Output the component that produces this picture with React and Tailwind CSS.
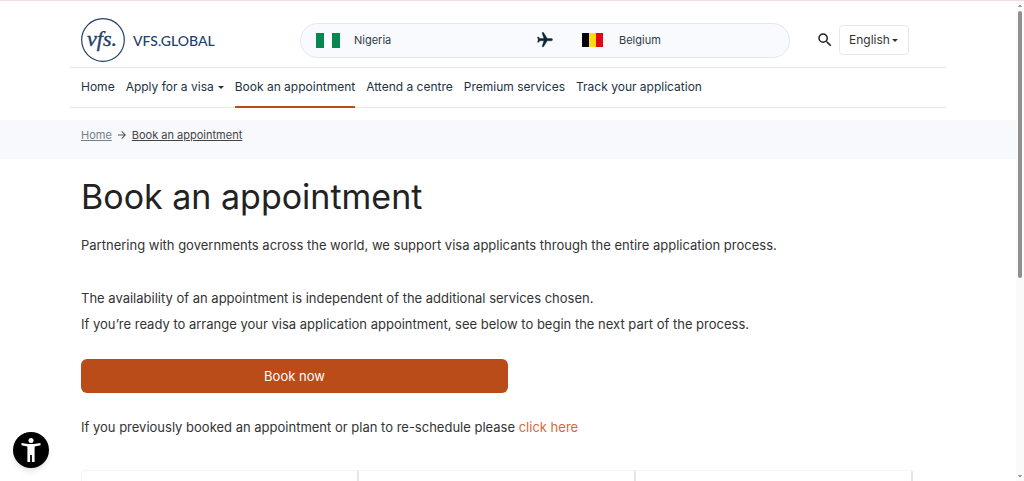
import { MdSearch, MdArrowForward, MdArrowDropDown } from 'react-icons/md';

const NAV_ITEMS = [
  { label: 'Home' },
  { label: 'Apply for a visa', hasMenu: true },
  { label: 'Book an appointment', active: true },
  { label: 'Attend a centre' },
  { label: 'Premium services' },
  { label: 'Track your application' },
];

function Caret({ className = '' }) {
  return (
    <svg viewBox="0 0 6 3" className={`w-1.5 h-[3px] ${className}`} aria-hidden="true">
      <path d="M0 0h6L3 3z" fill="currentColor" />
    </svg>
  );
}

function Logo() {
  return (
    <a href="#" aria-label="VFS.GLOBAL" className="flex items-center gap-2 text-[#1f4068]">
      <svg viewBox="0 0 44 44" className="w-11 h-11" aria-hidden="true">
        <circle cx="22" cy="22" r="21.3" fill="none" stroke="currentColor" strokeWidth="1.2" />
        <text
          x="21"
          y="28"
          textAnchor="middle"
          fill="currentColor"
          stroke="currentColor"
          strokeWidth=".4"
          className="font-['Liberation_Serif',serif] text-[22px] italic"
        >
          vfs.
        </text>
      </svg>
      <span className="pt-0.5 font-['Lato',sans-serif] text-sm font-medium">VFS.GLOBAL</span>
    </a>
  );
}

function RoutePicker() {
  return (
    <div className="ml-auto flex h-[35px] w-[490px] items-center rounded-full border border-[#e3e8f0] bg-[#f8fafd] pl-[15px] text-[#2d3b48] text-[11px]">
      <div className="flex flex-1 items-center gap-3.5">
        <svg viewBox="0 0 24 15" className="w-6 h-[15px]" aria-hidden="true">
          <path d="M0 0h24v15H0z" fill="#fff" />
          <path d="M0 0h8v15H0zM16 0h8v15h-8z" fill="#088751" />
        </svg>
        <span>Nigeria</span>
      </div>
      <svg viewBox="0 0 24 24" className="mr-7 w-[18px] h-[18px] rotate-90 text-[#0c2733]" aria-hidden="true">
        <path
          d="M21 16v-2l-8-5V3.500a1.500 1.500 0 0 0-3 0V9l-8 5v2l8-2.500V19l-2 1.500V22l3.500-1 3.500 1v-1.500L13 19v-5.500z"
          fill="currentColor"
          stroke="currentColor"
          strokeWidth=".5"
        />
      </svg>
      <div className="flex w-[207px] items-center gap-4">
        <svg viewBox="0 0 21 14" className="w-[21px] h-3.5" aria-hidden="true">
          <path d="M0 0h7v14H0z" fill="#000" />
          <path d="M7 0h7v14H7z" fill="#ffda0c" />
          <path d="M14 0h7v14h-7z" fill="#e30613" />
        </svg>
        <span>Belgium</span>
      </div>
    </div>
  );
}

function Header() {
  return (
    <header className="mx-auto w-full max-w-[876px]">
      <div className="flex items-center border-b border-[#e6e6e6] pt-[17px] pr-[37px] pb-[5px] pl-[11px]">
        <Logo />
        <RoutePicker />
        <button type="button" aria-label="Search" className="ml-6.5 text-[#222]">
          <MdSearch className="w-[18px] h-[18px]" />
        </button>
        <div className="ml-[5px] flex h-[30px] w-[70px] items-center rounded border border-[#e6e8eb] text-[#333]">
          <select aria-label="Language" className="h-full appearance-none pl-[9px] text-xs outline-none">
            <option>English</option>
          </select>
          <Caret className="ml-0.5 shrink-0" />
        </div>
      </div>
      <nav className="flex gap-[11px] border-b border-[#e6e6e6] px-[11px]">
        {NAV_ITEMS.map((item) => (
          <a
            key={item.label}
            href="#"
            className={`-mb-px flex h-10 items-center gap-1 whitespace-nowrap border-b-2 text-xs text-[#22323f] ${
              item.active ? 'border-[#b94c18]' : 'border-transparent'
            }`}
          >
            {item.label}
            {item.hasMenu && <Caret />}
          </a>
        ))}
      </nav>
    </header>
  );
}

function Breadcrumb() {
  return (
    <div className="mt-3 bg-[#f7f9fc]">
      <nav aria-label="Breadcrumb" className="mx-auto flex h-[39px] max-w-[876px] items-start px-[11px] pt-[7px] text-[11px] leading-4">
        <a href="#" className="text-[#75808a] underline">Home</a>
        <MdArrowForward className="mx-1 mt-0.5 w-3 h-3 text-[#555]" />
        <a href="#" className="text-[#444] underline">Book an appointment</a>
      </nav>
    </div>
  );
}

function Scrollbar() {
  return (
    <div className="flex w-2 shrink-0 flex-col items-center bg-[#fafafa] text-[#777]" aria-hidden="true">
      <MdArrowDropDown className="h-2.5 w-2.5 rotate-180" />
      <div className="h-[267px] w-1 rounded-full bg-[#8f8f8f]" />
      <MdArrowDropDown className="mt-auto h-2.5 w-2.5" />
    </div>
  );
}

export default function App() {
  return (
    <div className="flex h-screen overflow-hidden border-t border-[#f3dfe2] bg-white font-['Inter',sans-serif]">
      <div className="min-w-0 flex-1">
        <Header />
        <Breadcrumb />
        <main className="mx-auto max-w-[876px] px-[11px] pt-4 text-[13px] leading-[26px] text-[#333]">
          <h1 className="text-[34px] leading-[44px] text-[#222]">Book an appointment</h1>
          <p className="mt-[13px]">
            Partnering with governments across the world, we support visa applicants through the entire application process.
          </p>
          <p className="mt-[27px]">The availability of an appointment is independent of the additional services chosen.</p>
          <p>If you’re ready to arrange your visa application appointment, see below to begin the next part of the process.</p>
          <button type="button" className="mt-[22px] block h-[34px] w-1/2 rounded-md bg-[#b94c18] text-white">
            Book now
          </button>
          <p className="mt-[21px]">
            If you previously booked an appointment or plan to re-schedule please{' '}
            <a href="#" className="text-[#d5693d]">click here</a>
          </p>
          <div className="mt-[30px] grid max-w-[832px] grid-cols-3 rounded-t border-t border-l border-[#f5f5f5]">
            <div className="h-20 border-r-2 border-[#e6e6e6]" />
            <div className="h-20 border-r-2 border-[#e6e6e6]" />
            <div className="h-20 border-r-2 border-[#e6e6e6]" />
          </div>
        </main>
      </div>
      <Scrollbar />
      <button
        type="button"
        aria-label="Accessibility options"
        className="fixed bottom-[13px] left-[13px] flex h-9 w-9 items-center justify-center rounded-full bg-black text-white shadow-md"
      >
        <svg viewBox="0 0 20 24" className="h-6 w-5" fill="currentColor" aria-hidden="true">
          <circle cx="10" cy="2.600" r="2.500" />
          <path d="M.5 5l6.500 1h6l6.500-1v2.200L13.600 8.500V24h-2.700v-7H9.100v7H6.400V8.500L.5 7.200z" />
        </svg>
      </button>
    </div>
  );
}
